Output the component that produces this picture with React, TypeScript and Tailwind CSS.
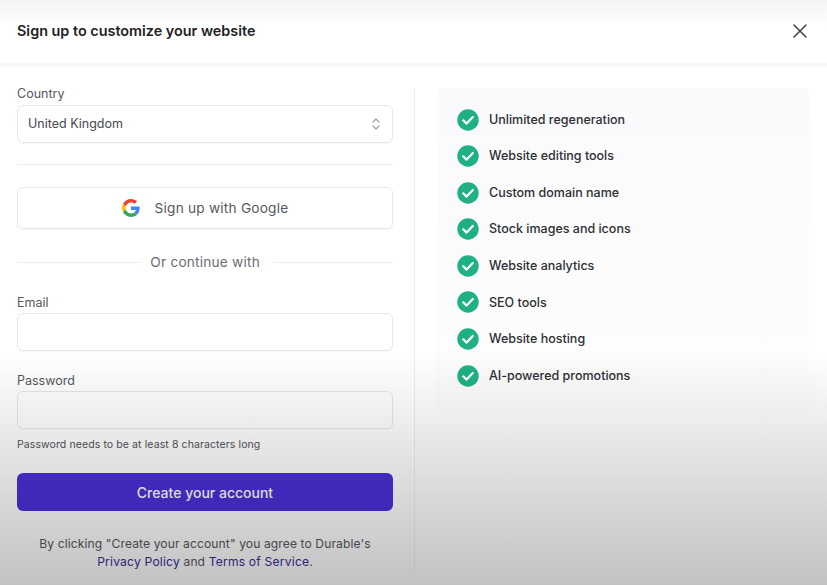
import React from "react";

const features = [
  "Unlimited regeneration",
  "Website editing tools",
  "Custom domain name",
  "Stock images and icons",
  "Website analytics",
  "SEO tools",
  "Website hosting",
  "AI-powered promotions",
];

function Check() {
  return (
    <svg width="22" height="22" viewBox="0 0 22 22" className="shrink-0">
      <circle cx="11" cy="11" r="10.7" fill="#1fb185" />
      <path d="M6.2 11.3 L9.6 14.6 L15.8 8" fill="none" stroke="#fff" strokeWidth="2.2" strokeLinecap="round" strokeLinejoin="round" />
    </svg>
  );
}

function GoogleG() {
  return (
    <svg width="18" height="18" viewBox="0 0 48 48">
      <path fill="#EA4335" d="M24 9.5c3.5 0 6.7 1.2 9.2 3.6l6.9-6.9C35.9 2.4 30.5 0 24 0 14.6 0 6.5 5.4 2.6 13.2l8 6.2C12.4 13.7 17.7 9.5 24 9.5z" />
      <path fill="#4285F4" d="M47 24.5c0-1.6-.1-3.1-.4-4.5H24v9h12.9c-.6 3-2.2 5.5-4.7 7.2l7.7 6c4.5-4.2 7.1-10.3 7.1-17.7z" />
      <path fill="#FBBC05" d="M10.5 28.6c-.5-1.4-.8-3-.8-4.6s.3-3.2.8-4.6l-8-6.2C.9 16.5 0 20.100 0 24s.9 7.500 2.600 10.800l7.900-6.200z" />
      <path fill="#34A853" d="M24 48c6.500 0 11.900-2.100 15.900-5.800l-7.700-6c-2.200 1.500-5 2.300-8.200 2.300-6.300 0-11.600-4.200-13.500-9.900l-8 6.200C6.500 42.600 14.600 48 24 48z" />
    </svg>
  );
}

function Field({ label, labelClass, inputClass }: { label: string; labelClass: string; inputClass: string }) {
  return (
    <div className={labelClass}>
      <div className="text-[12.5px] leading-[17px] text-[#55585f]">{label}</div>
      <div className={inputClass} />
    </div>
  );
}

export default function App() {
  return (
    <div className="relative h-[585px] w-[827px] overflow-hidden bg-white font-['Inter',sans-serif]">
      <header className="flex h-[62px] items-center justify-between bg-gradient-to-b from-[#f3f3f3] via-white via-40% to-white pl-[17px] pr-[20px]">
        <h1 className="text-[14.4px] font-semibold text-[#1f2125]">Sign up to customize your website</h1>
        <svg width="14" height="14" viewBox="0 0 14 14" fill="none" stroke="#3c3f45" strokeWidth="1.5" strokeLinecap="round">
          <path d="M1 1 L13 13 M13 1 L1 13" />
        </svg>
      </header>
      <div className="h-[5px] bg-[#f8f8f9]" />

      <main className="flex">
        <section className="ml-[17px] w-[376px] pt-[18px]">
          <div className="text-[12.5px] leading-[17px] text-[#55585f]">Country</div>
          <div className="mt-[3px] flex h-[38px] items-center justify-between rounded-md border border-[#e6e7ea] pl-[11px] pr-[11px] text-[12.5px] text-[#45484f] shadow-[0_1px_1px_rgba(0,0,0,0.03)]">
            <span className="-ml-px">United Kingdom</span>
            <svg width="10" height="14" viewBox="0 0 10 14" fill="none" stroke="#9a9da3" strokeWidth="1.2" strokeLinecap="round" strokeLinejoin="round">
              <path d="M2 5 L5 2 L8 5 M2 9 L5 12 L8 9" />
            </svg>
          </div>
          <div className="mt-[21px] h-px bg-[#eeeff1]" />
          <div className="mt-[22px] flex h-[42px] items-center justify-center gap-[15px] rounded-md border border-[#e6e7ea] text-[13.700px] tracking-[0.2px] text-[#55585f] shadow-[0_1px_1px_rgba(0,0,0,0.03)]">
            <GoogleG />
            <span>Sign up with Google</span>
          </div>
          <div className="mt-[24px] flex h-[18px] items-center gap-[9px] text-[13.700px] tracking-[0.2px] text-[#6a6d74]">
            <div className="h-px flex-1 bg-[#eeeff1]" />
            <span>Or continue with</span>
            <div className="ml-[4px] h-px w-[120px] bg-[#eeeff1]" />
          </div>
          <Field
            label="Email"
            labelClass="mt-[23px]"
            inputClass="mt-[2px] h-[38px] rounded-md border border-[#e6e7ea] bg-white shadow-[0_1px_1px_rgba(0,0,0,0.03)]"
          />
          <Field
            label="Password"
            labelClass="mt-[21px]"
            inputClass="mt-[2px] h-[38px] rounded-md border border-[#e6e7ea] bg-white shadow-[0_1px_1px_rgba(0,0,0,0.03)]"
          />
          <p className="mt-[9px] text-[10.5px] leading-[14px] tracking-[0.1px] text-[#4f5258]">Password needs to be at least 8 characters long</p>
          <button className="mt-[21px] flex h-[38px] w-full items-center justify-center rounded-md bg-[#4a30d8] text-[14px] font-medium text-white">
            Create your account
          </button>
          <p className="mt-[24px] text-center text-[12.100px] leading-[18px] tracking-[0.1px] text-[#55585f]">
            By clicking "Create your account" you agree to Durable's
            <br />
            <span className="tracking-[0.2px] text-[#3a2a9a]">Privacy Policy</span> and <span className="tracking-[0.2px] text-[#3a2a9a]">Terms of Service</span>.
          </p>
        </section>

        <div className="ml-[21px] mt-[21px] h-[482px] w-px bg-[#eeeff1]" />

        <aside className="ml-[22px] mt-[21px] h-[322px] w-[372px] rounded-md bg-gradient-to-b from-[#fafafc] to-[#fdfdfd] pl-[20px] pt-[20.5px]">
          <ul className="flex flex-col gap-[14.600px]">
            {features.map((f) => (
              <li key={f} className="flex h-[22px] items-center gap-[10px] text-[12.500px] font-medium text-[#2d2f34]">
                <Check />
                <span className="pt-px">{f}</span>
              </li>
            ))}
          </ul>
        </aside>
      </main>

      <div className="pointer-events-none absolute inset-x-0 bottom-0 h-[235px] bg-gradient-to-b from-transparent to-[rgba(0,0,0,0.24)]" />
    </div>
  );
}
